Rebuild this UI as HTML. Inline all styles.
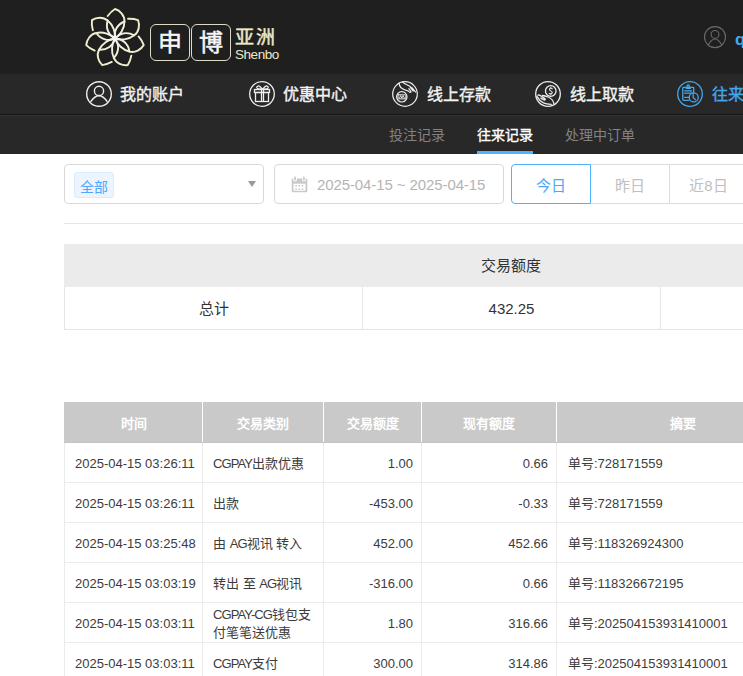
<!DOCTYPE html>
<html lang="zh-CN">
<head>
<meta charset="utf-8">
<style>
*{margin:0;padding:0;box-sizing:border-box}
html,body{width:743px;height:676px;overflow:hidden;background:#fff;font-family:"Liberation Sans",sans-serif;color:#333}
.abs{position:absolute}
#hdr{position:absolute;left:0;top:0;width:743px;height:74px;background:#1f1f1f}
#nav{position:absolute;left:0;top:74px;width:743px;height:40px;background:#282828}
#nav .item{position:absolute;top:1px;height:40px;line-height:40px;font-size:16px;-webkit-text-stroke:0.4px currentColor;color:#f2f2f2;white-space:nowrap}
#nav svg{position:absolute;top:6px}
#ln1{position:absolute;left:0;top:114px;width:743px;height:1px;background:#141414}
#ln2{position:absolute;left:0;top:115px;width:743px;height:1px;background:#333}
#sub{position:absolute;left:0;top:116px;width:743px;height:38px;background:#282828}
#sub span{position:absolute;top:1px;line-height:37px;font-size:14px;color:#828282;white-space:nowrap}
#sub span.on{color:#fff;-webkit-text-stroke:0.35px #fff}
#bar{position:absolute;left:477px;top:151px;width:56px;height:3px;background:#4db3ff}
.box{position:absolute;border:1px solid #d9d9d9;border-radius:4px;background:#fff}
.th{top:402px;height:40px;line-height:43px;font-size:13px;font-weight:bold;color:#fff;text-align:center;white-space:nowrap}
.td{height:39px;line-height:41px;font-size:13px;color:#3c3c3c;white-space:nowrap}
.cap{letter-spacing:-0.9px}
.td2{height:39px;padding-top:3px!important;line-height:18px;font-size:13px;color:#3c3c3c}
</style>
</head>
<body>
<div id="hdr">
  <svg class="abs" style="left:84px;top:7px" width="62" height="62" viewBox="-31 -31 62 62">
    <defs><radialGradient id="lg" gradientUnits="userSpaceOnUse" cx="0" cy="0" r="30"><stop offset="0" stop-color="#f6f6f4"/><stop offset="0.35" stop-color="#f2f0dc"/><stop offset="1" stop-color="#efecc6"/></radialGradient></defs>
    <g fill="none" stroke="url(#lg)" stroke-width="1.9" stroke-linecap="round" stroke-linejoin="round" transform="translate(0 0.5)">
      <g id="pt"><path d="M0 0 C5 -3 9.5 -10 9.5 -17 C9.8 -23 5 -28 0 -29.5 Q-4 -27 -7.3 -22.5"/><path d="M0 0 C-1.5 -7 2 -14 9.5 -17"/></g>
      <use href="#pt" transform="rotate(51.43)"/>
      <use href="#pt" transform="rotate(102.86)"/>
      <use href="#pt" transform="rotate(154.29)"/>
      <use href="#pt" transform="rotate(205.71)"/>
      <use href="#pt" transform="rotate(257.14)"/>
      <use href="#pt" transform="rotate(308.57)"/>
    </g>
  </svg>
  <div class="abs" style="left:150px;top:24px;width:40px;height:37px;border:1px solid #dedbc4;border-radius:6px;color:#f6f6f6;font-size:24px;-webkit-text-stroke:0.5px #f6f6f6;line-height:35px;text-align:center">申</div>
  <div class="abs" style="left:191px;top:24px;width:40px;height:37px;border:1px solid #dedbc4;border-radius:6px;color:#f6f6f6;font-size:24px;-webkit-text-stroke:0.5px #f6f6f6;line-height:35px;text-align:center">博</div>
  <div class="abs" style="left:235px;top:25.5px;font-size:19px;-webkit-text-stroke:0.45px #ece9c9;line-height:24px;letter-spacing:2px;color:#ece9c9;white-space:nowrap">亚洲</div>
  <div class="abs" style="left:235px;top:48px;font-size:13.5px;letter-spacing:-0.45px;line-height:14px;color:#ece9c9">Shenbo</div>
  <svg class="abs" style="left:702px;top:25px" width="26" height="26" viewBox="0 0 26 26">
    <g fill="none" stroke="#6a6a6a" stroke-width="1.1">
      <circle cx="13" cy="12.1" r="10.5"/>
      <circle cx="13" cy="9.4" r="3.9"/>
      <path d="M6.2 20 Q13 8 19.8 20"/>
    </g>
  </svg>
  <div class="abs" style="left:735px;top:28.5px;font-size:17px;line-height:22px;font-weight:bold;color:#3ea8ff">q</div>
</div>

<div id="nav">
  <!-- 我的账户 -->
  <svg style="left:85px" width="28" height="28" viewBox="0 0 28 28"><g fill="none" stroke="#eee" stroke-width="1.4"><circle cx="14" cy="14" r="12.3"/><circle cx="14" cy="10.9" r="4.6"/><path d="M5.6 21.8 Q14 9.6 22.4 21.8"/></g></svg>
  <div class="item" style="left:120px">我的账户</div>
  <!-- 优惠中心 -->
  <svg style="left:248px" width="28" height="28" viewBox="0 0 28 28"><g fill="none" stroke="#eee" stroke-width="1.3"><circle cx="14" cy="14" r="12.3"/><rect x="6.5" y="9.5" width="15" height="3"/><rect x="7.5" y="12.5" width="13" height="9"/><path d="M13.5 9.5 V21.5 M15.5 9.5 V21.5 M14.5 9.3 L11.8 6.5 C10.8 5.5 8.8 6 8.8 7.5 C8.8 9 10.3 9.3 14.5 9.3 C18.7 9.3 20.2 9 20.2 7.5 C20.2 6 18.2 5.5 17.2 6.5 L14.5 9.3"/></g></svg>
  <div class="item" style="left:283px">优惠中心</div>
  <!-- 线上存款 -->
  <svg style="left:391px" width="28" height="28" viewBox="0 0 28 28"><g fill="none" stroke="#eee" stroke-width="1.2" stroke-linecap="round" stroke-linejoin="round"><circle cx="14" cy="14" r="12.3"/><path d="M8.2 3.3 C8.3 6.5 10.5 9 14 9.8 C16 10.2 17.3 10.6 18.3 11.8 C19 12.6 20.3 12.4 19.9 11.3 L17.8 8.6"/><path d="M11.4 2 C14 4 16.5 5 19 6.5 C21.5 8 23.3 10 24.6 12"/><path d="M19.3 7.3 L22 10.8 M21 7.9 L23.3 11"/><circle cx="10.8" cy="16.8" r="5.2"/><rect x="7" y="14.8" width="7.8" height="4.1" rx="0.6" stroke-width="1"/><path d="M8.4 18.2 L9.6 15.6 L10.9 18.2 L12.1 15.6 L13.4 18.2" stroke-width="0.9"/></g></svg>
  <div class="item" style="left:427px">线上存款</div>
  <!-- 线上取款 -->
  <svg style="left:534px" width="28" height="28" viewBox="0 0 28 28"><g fill="none" stroke="#eee" stroke-width="1.3" stroke-linecap="round" stroke-linejoin="round"><circle cx="14" cy="14" r="12.3"/><circle cx="16.75" cy="11" r="5.3"/><path d="M18.2 8.7 C17.6 7.9 15.5 8 15.5 9.4 C15.5 11 18.2 10.8 18.2 12.6 C18.2 14 16.1 14.2 15.2 13.3 M16.8 7.3 V8.1 M16.8 14 V14.8" stroke-width="1.1"/><path d="M3.9 15.2 C4.6 14.7 5.6 15.1 7 16 L10.8 18.6 C11.6 19.2 11.1 20.3 10.1 19.9 L6.8 18.1"/><path d="M3.1 16.6 C4.5 19.2 6.5 21.5 9.5 22.8 C12 23.8 14.5 24.1 17.2 24.4"/><path d="M8.4 15.5 C10.2 15.7 12 16.2 14 17 C17 18.1 19.1 20 19.9 23.6"/></g></svg>
  <div class="item" style="left:570px">线上取款</div>
  <!-- 往来记录 -->
  <svg style="left:676px" width="28" height="28" viewBox="0 0 28 28"><g fill="none" stroke="#45a6e8" stroke-width="1.3" stroke-linecap="round" stroke-linejoin="round"><circle cx="14" cy="14" r="12.3"/><path d="M12.9 20.3 H7.6 Q6.8 20.3 6.8 19.5 V8 Q6.8 7.3 7.6 7.3 H17 Q17.7 7.3 17.7 8 V12.9"/><circle cx="12.2" cy="6.2" r="1.2"/><path d="M10.2 8.4 H14.4 M8.7 10.8 H15.8 M8.7 13.2 H16.5 M8.7 17.4 H12.8"/><circle cx="17.75" cy="17.4" r="4.5"/><path d="M17.2 14.4 V17.8 L19.5 19.5"/></g></svg>
  <div class="item" style="left:712px;color:#45a6e8">往来记录</div>
</div>
<div id="ln1"></div><div id="ln2"></div>
<div id="sub">
  <span style="left:389px">投注记录</span>
  <span class="on" style="left:477px">往来记录</span>
  <span style="left:565px">处理中订单</span>
</div>
<div id="bar"></div>

<!-- filters -->
<div class="box" style="left:64px;top:164px;width:200px;height:40px"></div>
<div class="abs" style="left:74px;top:172px;width:40px;height:26px;background:#ecf5ff;border:1px solid #d9ecff;border-radius:3px;color:#4fa6f8;font-size:14px;line-height:28px;text-align:center">全部</div>
<svg class="abs" style="left:248px;top:181px" width="8" height="6"><path d="M0 0 H8 L4 6 Z" fill="#999"/></svg>
<div class="box" style="left:274px;top:164px;width:230px;height:40px"></div>
<svg class="abs" style="left:291px;top:176px" width="17" height="17" viewBox="0 0 17 17"><rect x="0.7" y="2.4" width="15.6" height="13.8" rx="1.2" fill="#c9c9c9"/><rect x="2.5" y="7.7" width="12" height="7.1" fill="#fff"/><g fill="#c9c9c9"><rect x="4.3" y="8.9" width="1.6" height="1.6"/><rect x="7.5" y="8.9" width="1.6" height="1.6"/><rect x="10.7" y="8.9" width="1.6" height="1.6"/><rect x="4.3" y="12.4" width="1.6" height="1.6"/><rect x="7.5" y="12.4" width="1.6" height="1.6"/><rect x="10.7" y="12.4" width="1.6" height="1.6"/></g><g fill="#fff"><rect x="2.3" y="0" width="3.6" height="5.4" rx="1.6"/><rect x="11.1" y="0" width="3.6" height="5.4" rx="1.6"/></g><g fill="#c9c9c9"><rect x="3.2" y="0.6" width="1.8" height="3.9" rx="0.9"/><rect x="12" y="0.6" width="1.8" height="3.9" rx="0.9"/></g></svg>
<div class="abs" style="left:317px;top:165px;line-height:40px;letter-spacing:-0.1px;font-size:15px;color:#b4b4b4;white-space:nowrap">2025-04-15 ~ 2025-04-15</div>
<div class="abs" style="left:669px;top:164px;width:80px;height:40px;border:1px solid #dcdcdc;color:#c0c0c0;font-size:15px;line-height:41px;text-align:center;text-indent:-1px">近8日</div>
<div class="abs" style="left:590px;top:164px;width:80px;height:40px;border:1px solid #dcdcdc;color:#c0c0c0;font-size:15px;line-height:41px;text-align:center;text-indent:-1px">昨日</div>
<div class="abs" style="left:511px;top:164px;width:80px;height:40px;border:1px solid #4db3ff;border-radius:4px 0 0 4px;color:#4aa8f8;font-size:15px;line-height:41px;text-align:center;text-indent:-1px;background:#fff">今日</div>
<div class="abs" style="left:64px;top:223px;width:700px;height:1px;background:#e6e6e6"></div>

<!-- summary -->
<div class="abs" style="left:64px;top:244px;width:700px;height:43px;background:#ebebeb"></div>
<div class="abs" style="left:64px;top:244px;width:894px;height:43px;line-height:43px;font-size:15px;text-align:center;color:#333">交易额度</div>
<div class="abs" style="left:64px;top:287px;width:700px;height:43px;border:1px solid #e6e6e6;border-top:none"></div>
<div class="abs" style="left:362px;top:287px;width:1px;height:43px;background:#e6e6e6"></div>
<div class="abs" style="left:660px;top:287px;width:1px;height:43px;background:#e6e6e6"></div>
<div class="abs" style="left:65px;top:287px;width:297px;line-height:44px;font-size:15px;text-align:center">总计</div>
<div class="abs" style="left:363px;top:287px;width:297px;line-height:44.5px;font-size:15px;text-align:center">432.25</div>

<!--MAIN-->
<div class="abs" style="left:64px;top:402px;width:744px;height:40px;background:#c9c9c9"></div>
<div class="abs" style="left:64px;top:442px;width:744px;height:1px;background:#c4c4c4"></div>
<div class="abs" style="left:202px;top:402px;width:1px;height:40px;background:#fff"></div>
<div class="abs" style="left:323px;top:402px;width:1px;height:40px;background:#fff"></div>
<div class="abs" style="left:421px;top:402px;width:1px;height:40px;background:#fff"></div>
<div class="abs" style="left:556px;top:402px;width:1px;height:40px;background:#fff"></div>
<div class="abs th" style="left:65px;width:137px">时间</div>
<div class="abs th" style="left:203px;width:120px">交易类别</div>
<div class="abs th" style="left:324px;width:97px">交易额度</div>
<div class="abs th" style="left:422px;width:134px">现有额度</div>
<div class="abs th" style="left:557px;width:251px">摘要</div>
<div class="abs" style="left:64px;top:482px;width:744px;height:1px;background:#ebebeb"></div>
<div class="abs" style="left:64px;top:522px;width:744px;height:1px;background:#ebebeb"></div>
<div class="abs" style="left:64px;top:562px;width:744px;height:1px;background:#ebebeb"></div>
<div class="abs" style="left:64px;top:602px;width:744px;height:1px;background:#ebebeb"></div>
<div class="abs" style="left:64px;top:642px;width:744px;height:1px;background:#ebebeb"></div>
<div class="abs" style="left:64px;top:682px;width:744px;height:1px;background:#ebebeb"></div>
<div class="abs" style="left:64px;top:443px;width:1px;height:240px;background:#ebebeb"></div>
<div class="abs" style="left:202px;top:443px;width:1px;height:240px;background:#ebebeb"></div>
<div class="abs" style="left:323px;top:443px;width:1px;height:240px;background:#ebebeb"></div>
<div class="abs" style="left:421px;top:443px;width:1px;height:240px;background:#ebebeb"></div>
<div class="abs" style="left:556px;top:443px;width:1px;height:240px;background:#ebebeb"></div>
<div class="abs td" style="left:65px;top:443px;width:137px;padding:0 0 0 10px;text-align:left">2025-04-15 03:26:11</div>
<div class="abs td" style="left:203px;top:443px;width:120px;padding:0 0 0 10px;text-align:left"><span class=cap>CGPAY</span>出款优惠</div>
<div class="abs td" style="left:324px;top:443px;width:97px;padding:0 8px 0 0;text-align:right">1.00</div>
<div class="abs td" style="left:422px;top:443px;width:134px;padding:0 8px 0 0;text-align:right">0.66</div>
<div class="abs td" style="left:557px;top:443px;width:251px;padding:0 0 0 11px;text-align:left">单号:728171559</div>
<div class="abs td" style="left:65px;top:483px;width:137px;padding:0 0 0 10px;text-align:left">2025-04-15 03:26:11</div>
<div class="abs td" style="left:203px;top:483px;width:120px;padding:0 0 0 10px;text-align:left">出款</div>
<div class="abs td" style="left:324px;top:483px;width:97px;padding:0 8px 0 0;text-align:right">-453.00</div>
<div class="abs td" style="left:422px;top:483px;width:134px;padding:0 8px 0 0;text-align:right">-0.33</div>
<div class="abs td" style="left:557px;top:483px;width:251px;padding:0 0 0 11px;text-align:left">单号:728171559</div>
<div class="abs td" style="left:65px;top:523px;width:137px;padding:0 0 0 10px;text-align:left">2025-04-15 03:25:48</div>
<div class="abs td" style="left:203px;top:523px;width:120px;padding:0 0 0 10px;text-align:left">由 <span class=cap>AG</span>视讯 转入</div>
<div class="abs td" style="left:324px;top:523px;width:97px;padding:0 8px 0 0;text-align:right">452.00</div>
<div class="abs td" style="left:422px;top:523px;width:134px;padding:0 8px 0 0;text-align:right">452.66</div>
<div class="abs td" style="left:557px;top:523px;width:251px;padding:0 0 0 11px;text-align:left">单号:118326924300</div>
<div class="abs td" style="left:65px;top:563px;width:137px;padding:0 0 0 10px;text-align:left">2025-04-15 03:03:19</div>
<div class="abs td" style="left:203px;top:563px;width:120px;padding:0 0 0 10px;text-align:left">转出 至 <span class=cap>AG</span>视讯</div>
<div class="abs td" style="left:324px;top:563px;width:97px;padding:0 8px 0 0;text-align:right">-316.00</div>
<div class="abs td" style="left:422px;top:563px;width:134px;padding:0 8px 0 0;text-align:right">0.66</div>
<div class="abs td" style="left:557px;top:563px;width:251px;padding:0 0 0 11px;text-align:left">单号:118326672195</div>
<div class="abs td" style="left:65px;top:603px;width:137px;padding:0 0 0 10px;text-align:left">2025-04-15 03:03:11</div>
<div class="abs td2" style="left:203px;top:603px;width:120px;padding:0 0 0 10px;text-align:left"><span class=cap>CGPAY-CG</span>钱包支<br>付笔笔送优惠</div>
<div class="abs td" style="left:324px;top:603px;width:97px;padding:0 8px 0 0;text-align:right">1.80</div>
<div class="abs td" style="left:422px;top:603px;width:134px;padding:0 8px 0 0;text-align:right">316.66</div>
<div class="abs td" style="left:557px;top:603px;width:251px;padding:0 0 0 11px;text-align:left">单号:202504153931410001</div>
<div class="abs td" style="left:65px;top:643px;width:137px;padding:0 0 0 10px;text-align:left">2025-04-15 03:03:11</div>
<div class="abs td" style="left:203px;top:643px;width:120px;padding:0 0 0 10px;text-align:left"><span class=cap>CGPAY</span>支付</div>
<div class="abs td" style="left:324px;top:643px;width:97px;padding:0 8px 0 0;text-align:right">300.00</div>
<div class="abs td" style="left:422px;top:643px;width:134px;padding:0 8px 0 0;text-align:right">314.86</div>
<div class="abs td" style="left:557px;top:643px;width:251px;padding:0 0 0 11px;text-align:left">单号:202504153931410001</div>
<!--/MAIN-->
</body>
</html>
